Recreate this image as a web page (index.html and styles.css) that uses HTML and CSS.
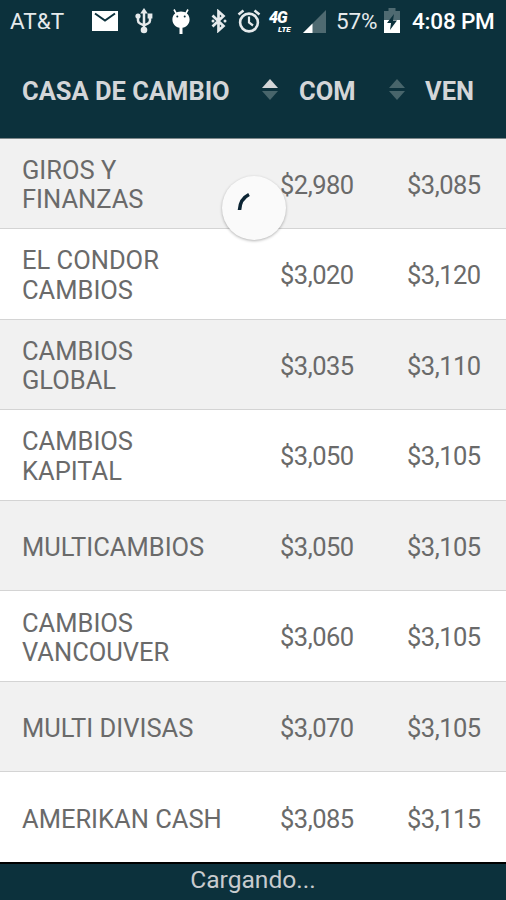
FILE: index.html
```
<!DOCTYPE html>
<html lang="es">
<head>
    <meta charset="UTF-8">
    <meta name="viewport" content="width=device-width, initial-scale=1.0">
    <title>Casas de cambio</title>
    <link rel="stylesheet" href="styles.css">
</head>
<body>
    <div class="status-bar">
        <span class="carrier">AT&amp;T</span>
        <svg class="icon-mail" width="26" height="20" viewBox="0 0 26 20">
            <path d="M0 0h26v20H0z" fill="#fff"/>
            <path d="M3 2.500l10 7 10-7" fill="none" stroke="#0c313c" stroke-width="2"/>
        </svg>
        <svg class="icon-usb" width="18" height="26" viewBox="0 0 18 26" fill="#e6eaec">
            <path d="M9 0l3.800 5.500H5.200z"/>
            <path d="M9 4v18M3 9v3.500q0 2 2 3l4 2M15 9v3.500q0 2-2 3l-4 2" fill="none" stroke="#e6eaec" stroke-width="2.500"/>
            <circle cx="3" cy="8" r="2.600"/>
            <path d="M12.600 5.500h4.800v5h-4.800z"/>
            <circle cx="9" cy="22" r="3.300"/>
        </svg>
        <svg class="icon-droid" width="20" height="25" viewBox="0 0 20 25">
            <path d="M3 0.500l2.500 4.500M17 0.500l-2.500 4.500" stroke="#fff" stroke-width="1.600"/>
            <path d="M10 2.500c5 0 8.600 3 8.600 8 0 4.600-3.600 8.200-7.100 8.200V25h-3v-6.300c-3.500 0-7.100-3.600-7.100-8.200 0-5 3.600-8 8.600-8z" fill="#fff"/>
            <circle cx="6.300" cy="7.500" r="1" fill="#0c313c"/>
            <circle cx="13.700" cy="7.500" r="1" fill="#0c313c"/>
        </svg>
        <svg class="icon-bluetooth" width="16" height="24" viewBox="0 0 16 24">
            <path d="M1.500 6.500l11 10.500-5 4.500V2.500l5 4.500-11 10.500" fill="none" stroke="#e6eaec" stroke-width="2.700"/>
            <circle cx="2" cy="12" r="1.500" fill="#e6eaec"/>
            <circle cx="14" cy="12" r="1.500" fill="#e6eaec"/>
        </svg>
        <svg class="icon-alarm" width="24" height="24" viewBox="0 0 24 24" fill="none" stroke="#e6eaec">
            <circle cx="12" cy="13.500" r="8.900" stroke-width="2.600"/>
            <path d="M12 7.500V13.500l4 3" stroke-width="2.200"/>
            <path d="M1.500 5.500l5-4M22.500 5.500l-5-4" stroke-width="2.600"/>
        </svg>
        <div class="network">
            <span class="net-4g">4G</span>
            <span class="net-lte">LTE</span>
        </div>
        <svg class="icon-signal" width="23" height="23" viewBox="0 0 23 23">
            <path d="M23 0v23H0z" fill="#4f6a71"/>
            <path d="M9.500 13.500V23H0z" fill="#fff"/>
        </svg>
        <span class="percent">57%</span>
        <svg class="icon-battery" width="18" height="26" viewBox="0 0 18 26">
            <path d="M5.500 0h7v3H17v10H1V3h4.500z" fill="#4f6a71"/>
            <path d="M1 12h16v13H1z" fill="#fff"/>
            <path d="M11 6L4 15h4L7 22l7-9.500h-4z" fill="#0c313c"/>
        </svg>
        <span class="clock">4:08 PM</span>
    </div>

    <div class="table-head">
        <div class="head-name">CASA DE CAMBIO</div>
        <svg class="sort sort-asc" width="16" height="21" viewBox="0 0 16 21">
            <path class="up" d="M8 0l8 9H0z"/>
            <path class="down" d="M0 12h16l-8 9z"/>
        </svg>
        <div class="head-buy">COM</div>
        <svg class="sort" width="16" height="21" viewBox="0 0 16 21">
            <path class="up" d="M8 0l8 9H0z"/>
            <path class="down" d="M0 12h16l-8 9z"/>
        </svg>
        <div class="head-sell">VEN</div>
    </div>

    <div class="rates">
        <div class="row"><div class="name">GIROS Y<br>FINANZAS</div><div class="price">$2,980</div><div class="price">$3,085</div></div>
        <div class="row"><div class="name">EL CONDOR<br>CAMBIOS</div><div class="price">$3,020</div><div class="price">$3,120</div></div>
        <div class="row"><div class="name">CAMBIOS<br>GLOBAL</div><div class="price">$3,035</div><div class="price">$3,110</div></div>
        <div class="row"><div class="name">CAMBIOS<br>KAPITAL</div><div class="price">$3,050</div><div class="price">$3,105</div></div>
        <div class="row"><div class="name">MULTICAMBIOS</div><div class="price">$3,050</div><div class="price">$3,105</div></div>
        <div class="row"><div class="name">CAMBIOS<br>VANCOUVER</div><div class="price">$3,060</div><div class="price">$3,105</div></div>
        <div class="row"><div class="name">MULTI DIVISAS</div><div class="price">$3,070</div><div class="price">$3,105</div></div>
        <div class="row"><div class="name">AMERIKAN CASH</div><div class="price">$3,085</div><div class="price">$3,115</div></div>
    </div>

    <div class="footer">Cargando...</div>

    <!-- refresh spinner, floats over the list -->
    <div class="spinner">
        <svg width="64" height="64" viewBox="0 0 64 64">
            <path d="M17.500 34q0.500-11 9.500-15.500" fill="none" stroke="#0b2433" stroke-width="3.600"/>
        </svg>
    </div>
</body>
</html>
```

FILE: styles.css
```
* {
    box-sizing: border-box;
}
body {
    margin: 0;
    height: 900px;
    display: flex;
    flex-direction: column;
    overflow: hidden;
    background: #fff;
    font-family: Roboto, sans-serif;
    font-size: 25.5px;
    color: #6a6a6a;
}
svg {
    display: block;
    flex: none;
}
.status-bar {
    display: flex;
    align-items: center;
    flex: none;
    height: 42px;
    padding-left: 10px;
    background: #0c313c;
    color: #e6eaec;
    font-size: 22.5px;
    white-space: nowrap;
}
.carrier {
    width: 82px;
}
.icon-usb {
    margin-left: 17px;
}
.icon-droid {
    margin-left: 18px;
}
.icon-bluetooth {
    margin-left: 20px;
}
.icon-alarm {
    margin-left: 10px;
}
.network {
    display: flex;
    flex-direction: column;
    width: 28px;
    margin: 3px 0 0 8px;
    color: #fff;
    font-weight: 900;
    font-style: italic;
}
.net-4g {
    font-size: 16px;
    line-height: 12px;
    letter-spacing: -1px;
}
.net-lte {
    padding: 2px 0 0 9px;
    font-size: 8px;
    line-height: 8px;
}
.icon-signal {
    margin-left: 6px;
}
.percent {
    width: 47px;
    margin-left: 10px;
    letter-spacing: -0.2px;
}
.clock {
    margin-left: 11px;
    font-weight: 500;
    letter-spacing: -0.2px;
    color: #fff;
}
.table-head {
    display: flex;
    align-items: center;
    flex: none;
    height: 97px;
    padding: 2px 0 0 22px;
    background: #0c313c;
    border-bottom: 1px solid #7d878a;
    color: #d4d6d8;
    font-size: 25.5px;
    font-weight: 700;
    white-space: nowrap;
}
.head-name {
    width: 240px;
}
.sort {
    margin-bottom: 3px;
}
.sort .up,
.sort .down {
    fill: #48656b;
}
.sort-asc .up {
    fill: #d4d6d8;
}
.head-buy {
    width: 90px;
    padding-left: 21px;
}
.head-buy + .sort {
    margin-left: 21px;
}
.head-sell {
    padding-left: 20px;
}
.rates {
    display: grid;
    grid-template-rows: repeat(8, 90.57px);
    flex: none;
    height: 723px;
    margin-top: -0.5px;
    overflow: hidden;
}
.row {
    display: grid;
    grid-template-columns: 258px 127px 99px;
    align-items: center;
    padding-left: 22px;
    padding-top: 4px;
    border-bottom: 1px solid #d4d4d4;
    line-height: 29.5px;
}
.row:nth-child(odd) {
    background: #f1f1f1;
}
.row:last-child {
    border-bottom: 0;
}
.price {
    letter-spacing: -0.5px;
}
.footer {
    flex: 1;
    padding-top: 1px;
    background: #0c313c;
    border-top: 2px solid #000;
    color: #c8cbce;
    font-size: 24.6px;
    line-height: 30px;
    text-align: center;
}
.spinner {
    position: absolute;
    left: 222px;
    top: 176px;
    width: 64px;
    height: 64px;
    border-radius: 50%;
    background: #fafafa;
    box-shadow: 0 1px 3px rgba(0, 0, 0, 0.3);
}
```
